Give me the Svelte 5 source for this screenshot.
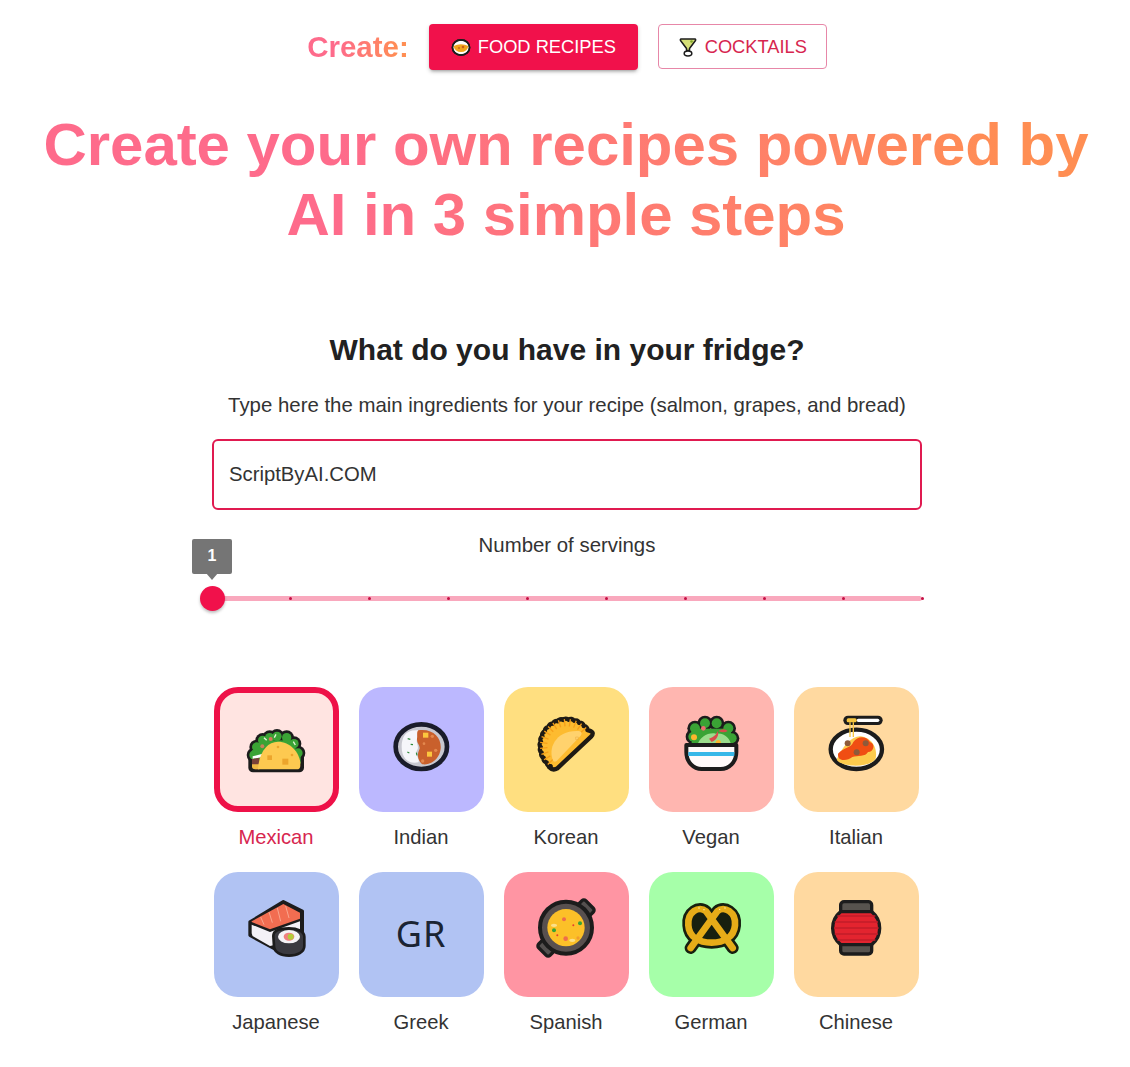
<script lang="ts">
	const row1 = [
		{ name: 'Mexican', bg: '#ffe4e1', icon: 'taco', selected: true },
		{ name: 'Indian', bg: '#bcb8ff', icon: 'curry' },
		{ name: 'Korean', bg: '#ffdf80', icon: 'dumpling' },
		{ name: 'Vegan', bg: '#ffb6b0', icon: 'salad' },
		{ name: 'Italian', bg: '#ffd9a0', icon: 'pasta' }
	];
	const row2 = [
		{ name: 'Japanese', bg: '#b1c3f3', icon: 'sushi' },
		{ name: 'Greek', bg: '#b1c3f3', icon: 'flag' },
		{ name: 'Spanish', bg: '#ff95a3', icon: 'paella' },
		{ name: 'German', bg: '#a6ffa9', icon: 'pretzel' },
		{ name: 'Chinese', bg: '#ffd9a0', icon: 'lantern' }
	];
	const cuisines = [...row1, ...row2];
	const ticks = Array.from({ length: 10 }, (_, i) => i);

	const tacoBumps = [[120, 204], [128, 180], [146, 160], [167, 152], [189, 148], [218, 152], [240, 170], [252, 198]];
	const saladBumps = [[133, 149], [138, 124], [168, 109], [203, 109], [238, 124], [248, 154]];

	// scalloped crust of the dumpling, bumps along a circle
	function crust(cx: number, cy: number, r: number, from: number, to: number, n: number) {
		let d = '';
		for (let i = 0; i <= n; i++) {
			const a = ((from + ((to - from) * i) / n) * Math.PI) / 180;
			const x = (cx + r * Math.cos(a)).toFixed(1);
			const y = (cy + r * Math.sin(a)).toFixed(1);
			if (i === 0) d += `M${x} ${y}`;
			else d += ` A11 11 0 0 1 ${x} ${y}`;
		}
		return d;
	}

	const pleats = Array.from({ length: 15 }, (_, i) => 135 + i * 13);
</script>

<div class="page">
	<div class="mode-row">
		<span class="create gradient">Create:</span>
		<button class="btn contained">
			<svg class="btn-icon" viewBox="0 0 20 20">
				<ellipse cx="10" cy="10.5" rx="8.6" ry="7.6" fill="#fff" stroke="#1c1c1c" stroke-width="1.6" />
				<path d="M2.5 9 Q10 5.5 17.5 9 Q16 15 10 15 Q4 15 2.5 9Z" fill="#f2a51e" />
				<circle cx="12" cy="10" r="1.3" fill="#c9601a" />
				<circle cx="8" cy="11" r="0.9" fill="#c9601a" />
				<ellipse cx="10" cy="10.5" rx="8.6" ry="7.6" fill="none" stroke="#1c1c1c" stroke-width="1.6" />
			</svg>
			FOOD RECIPES
		</button>
		<button class="btn outlined">
			<svg class="btn-icon" viewBox="0 0 20 20">
				<path d="M3 2 H17 Q18 2 17.5 3.5 L11.5 11.5 V13.5 H8.5 V11.5 L2.5 3.5 Q2 2 3 2Z" fill="#d6df78" stroke="#1c1c1c" stroke-width="1.5" stroke-linejoin="round" />
				<circle cx="13.5" cy="4.5" r="1.3" fill="#7fa52a" />
				<ellipse cx="10" cy="16.5" rx="3.8" ry="2.4" fill="#fff" stroke="#1c1c1c" stroke-width="1.5" />
			</svg>
			COCKTAILS
		</button>
	</div>

	<h1 class="gradient">Create your own recipes powered by<br />AI in 3 simple steps</h1>

	<section class="form">
		<h2>What do you have in your fridge?</h2>
		<p class="hint">Type here the main ingredients for your recipe (salmon, grapes, and bread)</p>
		<div class="field">ScriptByAI.COM</div>
		<p class="servings">Number of servings</p>
		<div class="slider">
			<div class="track"></div>
			{#each ticks as t}
				<span class="tick" style="left: {t * 79}px"></span>
			{/each}
			<div class="thumb"></div>
			<div class="value">1</div>
		</div>

		<div class="cuisines">
			{#each cuisines as c}
				<div class="cuisine" class:selected={c.selected}>
					<div class="tile" style="background: {c.bg}">
						{#if c.icon === 'flag'}
							<span class="flag">GR</span>
						{:else}
							<svg class="art" viewBox="0 0 375 375">
								{#if c.icon === 'taco'}
									{#each tacoBumps as b}
										<circle cx={b[0]} cy={b[1]} r="22" fill="#1c1c1c" />
									{/each}
									<rect x="103" y="195" width="167" height="61" rx="14" fill="#1c1c1c" />
									{#each tacoBumps as b}
										<circle cx={b[0]} cy={b[1]} r="14" fill="#3aa335" />
									{/each}
									<rect x="114" y="190" width="146" height="40" fill="#3aa335" />
									<rect x="135" y="160" width="110" height="40" fill="#3aa335" />
									<path d="M150 152 l8 8 M186 142 l-5 10 M238 164 l6 10" stroke="#e6f5d8" stroke-width="4" />
									<circle cx="170" cy="156" r="6" fill="#d8765a" />
									<circle cx="145" cy="178" r="6" fill="#c9805a" />
									<path d="M116 208 L146 200 V210 L116 216Z" fill="#fff" />
									<path d="M114 216 L136 212 V247 H124 Q114 247 114 238Z" fill="#7a4038" />
									<path d="M114 232 L136 232 V247 H124 Q114 247 114 238Z" fill="#f0b743" />
									<path d="M132 247 C135 195 160 164 192 164 C228 164 255 195 259 226 V236 Q259 247 248 247 Z" fill="#fdc950" />
									<rect x="160" y="205" width="14" height="14" fill="#eca52c" />
									<rect x="205" y="215" width="18" height="18" fill="#eca52c" />
									<circle cx="192" cy="180" r="4" fill="#eca52c" />
									<circle cx="234" cy="204" r="4" fill="#eca52c" />
								{:else if c.icon === 'curry'}
									<ellipse cx="187" cy="179" rx="77" ry="67" fill="#c8c8d0" stroke="#1a1c2a" stroke-width="14" />
									<path d="M178 130 C140 127 128 150 128 180 C128 215 150 232 178 226 C185 215 165 205 174 190 C182 178 170 170 174 155 Z" fill="#f6f6fa" />
									<path d="M178 130 C225 124 248 155 245 185 C242 215 215 236 190 232 C180 225 172 208 180 190 C188 178 172 170 174 155 C176 145 172 135 178 130Z" fill="#c9602c" />
									<rect x="192" y="137" width="16" height="15" fill="#fcc63e" />
									<rect x="204" y="194" width="15" height="15" fill="#fcc63e" />
									<circle cx="220" cy="148" r="5" fill="#e4884e" />
									<circle cx="195" cy="170" r="4" fill="#e4884e" />
									<circle cx="230" cy="190" r="5" fill="#e4884e" />
									<circle cx="191" cy="222" r="5" fill="#e4884e" />
									<path d="M146 155 l8 2 M155 172 l7 1 M172 197 l2 8 M145 195 l6 3" stroke="#2f8a3a" stroke-width="3.5" />
								{:else if c.icon === 'dumpling'}
									<path d={crust(188, 176, 78, 128, 323, 16) + ' Q274 134 262 148 L160 244 Q146 252 135 240 Z'} fill="#fdbb2f" stroke="#1e1a14" stroke-width="13" stroke-linejoin="round" />
									{#each pleats as p}
										<line
											x1={188 + 58 * Math.cos((p * Math.PI) / 180)}
											y1={176 + 58 * Math.sin((p * Math.PI) / 180)}
											x2={188 + 80 * Math.cos((p * Math.PI) / 180)}
											y2={176 + 80 * Math.sin((p * Math.PI) / 180)}
											stroke="#f59f1a"
											stroke-width="4"
										/>
									{/each}
									<path d="M148 222 C130 185 155 128 225 132 Q238 136 230 146 L158 222 Q152 227 148 222Z" fill="#ffd26d" />
									<path d="M215 150 h8 v8 h-8z" fill="none" stroke="#e9a941" stroke-width="1.5" />
								{:else if c.icon === 'salad'}
									{#each saladBumps as b}
										<circle cx={b[0]} cy={b[1]} r="23" fill="#1c1c1c" />
									{/each}
									<rect x="120" y="130" width="130" height="45" fill="#1c1c1c" />
									{#each saladBumps as b}
										<circle cx={b[0]} cy={b[1]} r="15" fill="#3aa335" />
									{/each}
									<rect x="128" y="125" width="118" height="50" fill="#3aa335" />
									<path d="M146 174 C150 150 180 135 200 140 C225 135 245 155 246 174Z" fill="#9bdc8c" />
									<circle cx="135" cy="151" r="9" fill="#fcb62d" />
									<circle cx="163" cy="124" r="7" fill="#ec6f6f" />
									<path d="M180 155 C195 150 205 140 205 132 C212 140 205 158 188 165Z" fill="#d84b4b" />
									<path d="M208 132 Q225 122 236 132 Q224 140 208 132Z" fill="#d84b4b" />
									<circle cx="208" cy="167" r="8" fill="#fcb62d" />
									<path d="M112 174 H262 V195 C262 226 240 246 215 246 H158 C134 246 112 226 112 195Z" fill="#fffafa" stroke="#1c1c1c" stroke-width="12" stroke-linejoin="round" />
									<rect x="118" y="195" width="138" height="12" fill="#38b7e8" />
								{:else if c.icon === 'pasta'}
									<ellipse cx="187" cy="187" rx="77" ry="59" fill="#fff" stroke="#1c1c1c" stroke-width="13" />
									<rect x="148" y="86" width="118" height="28" rx="14" fill="#1c1c1c" />
									<rect x="188" y="95" width="68" height="10" rx="5" fill="#fff" />
									<rect x="158" y="94" width="30" height="12" rx="5" fill="#f7c640" />
									<path d="M128 218 C140 240 225 245 245 215 C250 190 240 160 210 150 C180 140 150 170 128 218Z" fill="#fccb4d" />
									<path d="M132 200 C150 180 170 185 178 165 C190 148 215 145 228 165 C245 170 240 195 222 195 C215 210 190 205 175 210 C160 222 130 225 132 200Z" fill="#f04e13" />
									<circle cx="161" cy="169" r="9" fill="#8e5a3a" />
									<circle cx="215" cy="169" r="9" fill="#8e5a3a" />
									<circle cx="188" cy="196" r="9" fill="#8e5a3a" />
									<path d="M168 106 V150 M178 106 V150" stroke="#f7c640" stroke-width="4" />
								{:else if c.icon === 'sushi'}
									<path d="M108 150 L208 89 L265 118 V190 L220 240 L185 232 L108 190Z" fill="#1c1c1c" stroke="#1c1c1c" stroke-width="10" stroke-linejoin="round" />
									<path d="M113 148 L208 96 L258 122 V140 L168 172 L113 150Z" fill="#f26d51" />
									<path d="M140 135 L150 158 M165 120 L175 152 M190 108 L200 148 M215 102 L225 138" stroke="#f9a58e" stroke-width="3" />
									<path d="M113 158 L168 180 V222 L122 196 Q113 192 113 184Z" fill="#f3f1f6" />
									<path d="M168 180 L258 148 V172 L200 200 L178 220 L168 222Z" fill="#f3f1f6" />
									<path d="M178 192 C178 175 200 169 225 169 C250 169 271 178 271 194 V222 C271 240 250 251 225 251 C200 251 180 240 180 222Z" fill="#3a3a40" stroke="#1c1c1c" stroke-width="8" />
									<ellipse cx="225" cy="194" rx="33" ry="20" fill="#f5f3f6" />
									<ellipse cx="225" cy="194" rx="16" ry="12" fill="#f08080" />
									<ellipse cx="230" cy="194" rx="9" ry="9" fill="#b4cc3a" />
								{:else if c.icon === 'paella'}
									<rect x="222" y="93" width="48" height="30" rx="8" transform="rotate(45 246 108)" fill="#54504f" stroke="#1c1c1c" stroke-width="10" />
									<rect x="102" y="213" width="48" height="30" rx="8" transform="rotate(45 126 228)" fill="#54504f" stroke="#1c1c1c" stroke-width="10" />
									<circle cx="186" cy="167" r="78" fill="#58504f" stroke="#1c1c1c" stroke-width="12" />
									<circle cx="186" cy="167" r="56" fill="#fcc028" />
									<circle cx="150" cy="175" r="6" fill="#3aa335" />
									<circle cx="228" cy="154" r="6" fill="#3aa335" />
									<circle cx="180" cy="142" r="6" fill="#ee6d4a" />
									<circle cx="185" cy="200" r="7" fill="#ee6d4a" />
									<circle cx="160" cy="190" r="3" fill="#e53e2f" />
									<circle cx="208" cy="160" r="3" fill="#e53e2f" />
									<circle cx="222" cy="198" r="5" fill="#f39c2c" />
									<ellipse cx="150" cy="160" rx="9" ry="5" fill="#fde08a" />
									<ellipse cx="205" cy="205" rx="9" ry="5" fill="#fde08a" />
								{:else if c.icon === 'pretzel'}
									<ellipse cx="150" cy="155" rx="32" ry="42" fill="#17200f" />
									<ellipse cx="226" cy="155" rx="32" ry="42" fill="#17200f" />
									<path d="M188 145 L150 205 H226Z" fill="#17200f" />
									<path d="M125 228 L205 118 C225 100 262 120 258 160 C255 195 225 212 188 212 C150 212 120 195 118 160 C114 120 150 100 171 118 L251 228" fill="none" stroke="#17200f" stroke-width="36" stroke-linecap="round" stroke-linejoin="round" />
									<path d="M125 228 L205 118 C225 100 262 120 258 160 C255 195 225 212 188 212 C150 212 120 195 118 160 C114 120 150 100 171 118 L251 228" fill="none" stroke="#e6ac18" stroke-width="20" stroke-linecap="round" stroke-linejoin="round" />
									<circle cx="150" cy="108" r="2" fill="#fff3c4" />
									<circle cx="165" cy="113" r="2" fill="#fff3c4" />
									<circle cx="212" cy="112" r="2" fill="#fff3c4" />
									<circle cx="228" cy="108" r="2" fill="#fff3c4" />
								{:else if c.icon === 'lantern'}
									<rect x="140" y="89" width="93" height="157" rx="10" fill="#57534e" stroke="#1c1c1c" stroke-width="10" />
									<path d="M140 119 H233 C265 145 265 192 233 218 H140 C108 192 108 145 140 119Z" fill="#e3242f" stroke="#1c1c1c" stroke-width="10" stroke-linejoin="round" />
									<path d="M130 132 H244 M122 150 H252 M120 168 H254 M122 186 H252 M130 204 H244" stroke="#c21d2a" stroke-width="4" />
								{/if}
							</svg>
						{/if}
					</div>
					<span class="name">{c.name}</span>
				</div>
			{/each}
		</div>
	</section>
</div>

<style>
	:global(body) {
		margin: 0;
		background: #fff;
	}

	.page {
		height: 1067px;
		overflow: hidden;
		font-family: 'Liberation Sans', sans-serif;
		color: #333;
	}

	.gradient {
		background: linear-gradient(90deg, #fe6b8b 30%, #ff8e53 90%);
		-webkit-background-clip: text;
		background-clip: text;
		color: transparent;
	}

	.mode-row {
		display: flex;
		justify-content: center;
		align-items: flex-start;
		padding-top: 24px;
		margin-left: 4px;
	}

	.create {
		font: bold 29.5px/46px 'Liberation Sans', sans-serif;
		margin-right: 20px;
	}

	.btn {
		display: flex;
		align-items: center;
		justify-content: center;
		gap: 7px;
		border-radius: 4px;
		font: 400 18.3px 'Liberation Sans', sans-serif;
		box-sizing: border-box;
	}

	.btn-icon {
		width: 20px;
		height: 20px;
	}

	.contained {
		width: 209px;
		height: 46px;
		background: #f1114b;
		color: #fff;
		border: none;
		box-shadow: 0 3px 3px -2px rgba(0, 0, 0, 0.25), 0 2px 4px rgba(0, 0, 0, 0.18);
		margin-right: 20px;
	}

	.outlined {
		width: 169px;
		height: 45px;
		background: #fff;
		color: #d7264f;
		border: 1px solid #e787a8;
	}

	h1 {
		margin: 40px 0 0;
		padding-left: 2px;
		font: bold 60px/70px 'Liberation Sans', sans-serif;
		letter-spacing: -0.06px;
		text-align: center;
	}

	.form {
		width: 710px;
		margin: 0 auto;
		padding-left: 2px;
		position: relative;
		left: 1px;
		text-align: center;
	}

	h2 {
		margin: 80px 0 0;
		font: bold 30px/40px 'Liberation Sans', sans-serif;
		color: #212121;
	}

	.hint {
		margin: 20px 0 0;
		font-size: 20.4px;
		line-height: 30px;
	}

	.field {
		margin-top: 19px;
		height: 71px;
		box-sizing: border-box;
		border: 2px solid #e01a50;
		border-radius: 6px;
		padding: 0 15px;
		font-size: 20.3px;
		line-height: 67px;
		text-align: left;
	}

	.servings {
		margin: 20px 0 0;
		font-size: 20.4px;
		line-height: 30px;
	}

	.slider {
		position: relative;
		height: 4px;
		margin-top: 36px;
	}

	.track {
		height: 5px;
		background: #f9a8bd;
		border-radius: 3px;
	}

	.tick {
		position: absolute;
		top: 1px;
		width: 3px;
		height: 3px;
		border-radius: 50%;
		margin-left: -2px;
		background: #c40f44;
	}

	.thumb {
		position: absolute;
		left: -12px;
		top: -10px;
		width: 25px;
		height: 25px;
		border-radius: 50%;
		background: #f1114b;
		box-shadow: 0 2px 3px rgba(0, 0, 0, 0.25);
	}

	.value {
		position: absolute;
		left: -20px;
		top: -57px;
		width: 40px;
		height: 35px;
		border-radius: 2px;
		background: #757575;
		color: #fff;
		font-size: 16px;
		font-weight: 700;
		line-height: 33px;
		text-align: center;
	}

	.value::after {
		content: '';
		position: absolute;
		left: 14px;
		bottom: -6px;
		width: 0;
		height: 0;
		border-left: 6px solid transparent;
		border-right: 6px solid transparent;
		border-top: 7px solid #757575;
	}

	.cuisines {
		display: grid;
		grid-template-columns: repeat(5, 125px);
		column-gap: 20px;
		row-gap: 20px;
		margin-top: 87px;
		margin-left: -2px;
		justify-content: center;
	}

	.cuisine {
		display: flex;
		flex-direction: column;
		align-items: center;
	}

	.tile {
		width: 125px;
		height: 125px;
		box-sizing: border-box;
		border-radius: 24px;
		display: flex;
		align-items: center;
		justify-content: center;
	}

	.selected .tile {
		border: 6px solid #ee1148;
	}

	.art {
		width: 125px;
		height: 125px;
		flex: none;
	}

	.flag {
		font: 36px 'Noto Sans', sans-serif;
		color: #1b2433;
		margin-top: -2px;
		letter-spacing: 1px;
	}

	.name {
		margin-top: 10px;
		font-size: 20.2px;
		line-height: 30px;
	}

	.selected .name {
		color: #d7264f;
	}
</style>
